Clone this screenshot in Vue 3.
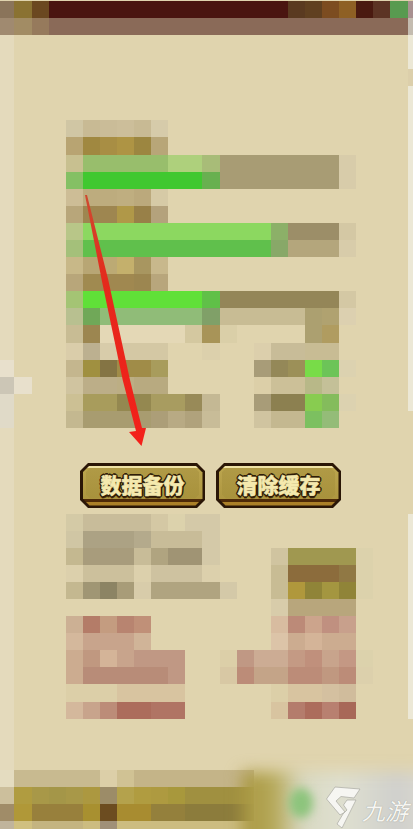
<script setup>
const rows = [
  [0, 0, '#8a745a #8a7232 #6b4820 #4a1510*14 #5a3a20 #604020 #7c4c20 #8e6024 #4a1a10 #5c3424 #589a50 #a89090'],
  [1, 0, '#a08a70 #a28c64 #967a5c #8a6a58*21 #c4bcb0'],
  [7, 4, '#d0c6a4 #c8ba94 #cabc98 #ccbe9a #c8ba94 #d6cbaa'],
  [8, 4, '#b8a472 #a08840 #a88e44 #ae9444 #9c8640 #b8a678'],
  [9, 4, '#c8c090 #98be6c*5 #aed07c*2 #a8bc78 #a89c74*7 #d8ccaa'],
  [10, 4, '#84c064 #40c830*7 #68b050 #a89c74*7 #d8ccaa'],
  [11, 4, '#cdbd96 #bdac7e*2 #bfae80 #bba97c #d6caa6'],
  [12, 4, '#b8a67a #9e8650*2 #b09848 #988048 #b4a27c'],
  [13, 4, '#b8c688 #8cd860*11 #8cb068 #9c8e68*3 #d4c8a4'],
  [14, 4, '#a4c07a #60c04c*11 #88a868 #b4a67c*3 #d8ccaa'],
  [15, 4, '#c8b888 #b8a674 #bcaa74 #c4b06c #a89660 #c8b88c'],
  [16, 4, '#b8a67a #a08a50 #a08850*2 #9c8650 #b8a67c'],
  [17, 4, '#a4c474 #60e038*7 #60c048 #948658*7 #d4c8a4'],
  [18, 4, '#b8c090 #70a858 #90bc78*6 #80a068 #c8bc94*5 #aca070 #b0a270 #dcd0b0'],
  [19, 4, '#c8bc94 #9c8650 #e4d8b6*5 #d4c8a0 #a89458 #dacfa8 _*4 #aca070 #b09c60'],
  [20, 4, '#dacdaa #bcb090 #d8ccaa #d4c8a4*3 _*2 #dcd0ac _*2 #dccfac #c8bc98*2 #c8bc94*2'],
  [21, 4, '#c4b68e #a09040 #847444 #a08c48*2 #a89c5c _*5 #a89c78 #948858 #9c9058 #78dc48 #6cc458 #dcd2b0'],
  [22, 4, '#d0c4a0 #bcae88*2 #bcae84 #b8aa80*2 _*5 #dccfa8 #ccc098*2 #b8b888 #c4c098'],
  [23, 4, '#ccc094 #a89c5c*2 #948850*2 #a89c60*2 #988a58 #c4b894 _*2 #a89c78 #8c8050*2 #88cc50 #84bc5c #dcd2b0'],
  [24, 4, '#c4b890 #a89c70*4 #ac9e78 #b8aa84 #b0a27c #c8bc98 _*2 #d0c4a0 #c4b890*2 #7cc060 #94bc78'],
  [30, 4, '#d4caa6 #c8bc9a*4 #d4c8a4 #dcd2ac #d4c9a8*2'],
  [31, 4, '#d0c6a4 #aca284*3 #b4aa8c #c8bc98*3 #d4c9a8'],
  [32, 4, '#c4b890 #a89c7c*3 #c8bc98 #b0a480 #a09474*2 #d4c9a8 _*3 #d0c4a0 #a09850*4 #dcd2ac'],
  [33, 4, '#dcd0ac #ccc09c*3 #dcd0ac #cec2a0*3 #dcd0ac _*3 #c8bc94 #8c6c3c*3 #907844 #dcd2ac'],
  [34, 4, '#c4b890 #a09674 #8c8464 #a89c78 #d8ccaa #b0a480*4 #d4c9a8 _*2 #c8bc94 #b0983c #908438 #a49640 #908438 #dcd2ac'],
  [35, 16, '#d8ccaa #b8a67c*4'],
  [36, 4, '#ccb094 #b47c68 #c49c80 #b88470 #c09078 _*7 #d8bca0 #bc8a78 #cca48c #c09080 #c8a08c'],
  [37, 4, '#d4b89c #c8a48c*3 #d0b498 _*7 #dcc4a8 #ccac90 #d4b498 #ccac90*2'],
  [38, 4, '#ccac90 #c09880 #d4b498 #c8a48c #c09884*3 _*2 #dccfa8 #c09884 #ccac94*2 #c49a84 #c0907c #c8a48c #c49884 #dcd2ac'],
  [39, 4, '#ccac90 #b88c78*5 #c09884 _*2 #d8c8a4 #bc8c78 #c4a488*2 #bc8c78*2 #c09880 #bc8c78 #dcd0ac'],
  [40, 4, '#dccfa8*3 #d8c4a0*4 _*5 #dccfa8 #d8c4a0*2 #d4c0a0 #d0bc9c'],
  [41, 4, '#d4b89c #c8a48c #bc8c78 #ac6c5c*2 #b07464*2 _*5 #d8c4a0 #b47c6c #ac6c5c #b88070 #a86858'],
  [45, 0, '#e4dcc0 #c8ba90*5 #dccfa8 #d0c294 #c4b488*7'],
  [46, 0, '#ccbf9c #b09c40 #a89848 #a49648 #a89848 #ac9840 #9c8c68 #b4a24c #b09c40 #ae9a40 #a8983c #a09040*4'],
  [47, 0, '#a08c68 #b09838 #98803c*3 #a89030 #6c4c20 #a88c30*2 #94803c*2 #8c7c3c*4'],
  [48, 0, '#c0b49c #d0c080 #c4b480*3 #ccbc80 #a09078 #ccbc80*8'],
]
// thin lighter margins of the picture, left and right
for (let r = 2; r < 45; r++) {
  let left = '#e4dabc'
  if (r === 21) left = '#e8e0cc'
  if (r === 22) left = '#ccc6b6 #e8e0cc'
  if (r === 23 || r === 24) left = '#e0dac8'
  rows.push([r, 0, left])
  if (r === 4) rows.push([r, 24, '#dccfab'])
  else if (r < 24 || (r >= 30 && r <= 41)) rows.push([r, 24, '#ece8d6'])
}

const cells = rows.flatMap(([row, start, spec]) => {
  let col = start
  const out = []
  for (const token of spec.split(' ')) {
    const [color, count = '1'] = token.split('*')
    for (let i = 0; i < Number(count); i++, col++) {
      if (color !== '_') out.push({ key: `${row}-${col}`, style: { gridRow: row + 1, gridColumn: col + 1, background: color } })
    }
  }
  return out
})
const buttons = ['数据备份', '清除缓存']
</script>

<template>
  <div class="stage">
    <div class="mosaic">
      <i v-for="c in cells" :key="c.key" :style="c.style"></i>
    </div>

    <div class="watermark">
      <div class="haze"></div>
      <div class="blob"></div>
      <svg class="logo" viewBox="-1 0 38 46" width="38" height="46">
        <path d="M8 2 L33 4 L27 13 L14 11.5 L9 16 L18 27 L13 30 L-0.5 14 Z" />
        <path d="M20 15 L29 15 L15 43 L10 39 L16 29 L20 25 L16.5 20 Z" />
      </svg>
      <span class="brand">九游</span>
    </div>

    <svg class="arrow" viewBox="0 0 413 829" width="413" height="829">
      <defs>
        <linearGradient id="shaft" x1="0" y1="195" x2="0" y2="446" gradientUnits="userSpaceOnUse">
          <stop offset="0" stop-color="#cf4a30" />
          <stop offset="0.35" stop-color="#e4291c" />
          <stop offset="1" stop-color="#f4201a" />
        </linearGradient>
      </defs>
      <path d="M85 195 L87 195 L108.3 280 L130 380 L142 428 L146 428 L141.5 446 L129 432 L136 431 L122.7 380 L101.7 280 Z" fill="url(#shaft)" />
    </svg>

    <div class="actions">
      <button v-for="b in buttons" :key="b" class="btn" type="button">
        <span class="rim"><span class="face">{{ b }}</span></span>
      </button>
    </div>
  </div>
</template>

<style scoped>
.stage {
  display: grid;
  width: 413px;
  height: 829px;
  overflow: hidden;
  background: #e0d4ae;
}
.stage > * {
  grid-area: 1 / 1;
}
.mosaic {
  display: grid;
  grid-template-columns: repeat(25, 17.1px);
  grid-auto-rows: 17.1px;
  align-content: start;
  margin-left: -2.7px;
  padding-top: 0.7px;
  filter: blur(0.5px);
}
.mosaic i {
  display: block;
}
.watermark {
  position: relative;
  overflow: hidden;
}
.haze {
  position: absolute;
  left: 242px;
  top: 772px;
  width: 200px;
  height: 90px;
  background: linear-gradient(90deg, #a8963f 0, #b5a858 16%, #d8d8c2 30%, #dfe0d0 50%, #cfcfcc 78%, #e2dfd2 100%);
  filter: blur(8px);
}
.blob {
  position: absolute;
  left: 289px;
  top: 788px;
  width: 24px;
  height: 30px;
  border-radius: 50%;
  background: #8cc47c;
  filter: blur(5px);
}
.logo {
  position: absolute;
  left: 326px;
  top: 785px;
  fill: #f6f6f2;
  stroke: #a9a9a2;
  stroke-width: 0.7;
}
.brand {
  position: absolute;
  left: 362px;
  top: 794px;
  font: italic 400 23px/32px "Noto Sans CJK SC", sans-serif;
  color: #f6f6f2;
  text-shadow: 0 0 1px #8d8d86;
}
.arrow {
  position: relative;
  filter: blur(0.3px);
}
.actions {
  position: relative;
  display: flex;
  gap: 11px;
  align-self: start;
  padding: 463px 0 0 80px;
}
.btn {
  width: 125px;
  height: 45px;
  padding: 2.5px;
  border: 0;
  background: #2a1606;
  clip-path: polygon(8px 0, calc(100% - 8px) 0, 100% 8px, 100% calc(100% - 8px), calc(100% - 8px) 100%, 8px 100%, 0 calc(100% - 8px), 0 8px);
}
.rim {
  display: block;
  box-sizing: border-box;
  height: 100%;
  padding: 2.5px 3.5px 7px;
  background: linear-gradient(#efe2a4 0, #efe2a4 6%, #bba54e 6%, #ae9640 82.5%, #4e2a08 82.5%, #4e2a08 90%, #ab8028 90%, #ab8028 100%);
  clip-path: polygon(7px 0, calc(100% - 7px) 0, 100% 7px, 100% calc(100% - 7px), calc(100% - 7px) 100%, 7px 100%, 0 calc(100% - 7px), 0 7px);
}
.face {
  display: flex;
  box-sizing: border-box;
  align-items: center;
  justify-content: center;
  height: 100%;
  padding-top: 2px;
  background: linear-gradient(#b09a46, #a8923c);
  clip-path: polygon(4px 0, calc(100% - 4px) 0, 100% 4px, 100% calc(100% - 4px), calc(100% - 4px) 100%, 4px 100%, 0 calc(100% - 4px), 0 4px);
  font: 900 21px/1 "Noto Sans CJK SC", sans-serif;
  color: #f4e9ae;
  -webkit-text-stroke: 0.5px #f4e9ae;
  text-shadow: 1.8px 0 #2e1c08, -1.8px 0 #2e1c08, 0 1.8px #2e1c08, 0 -1.8px #2e1c08, 1.3px 1.3px #2e1c08, -1.3px 1.3px #2e1c08, 1.3px -1.3px #2e1c08, -1.3px -1.3px #2e1c08, 0 2.5px #5a3a10;
}
</style>
